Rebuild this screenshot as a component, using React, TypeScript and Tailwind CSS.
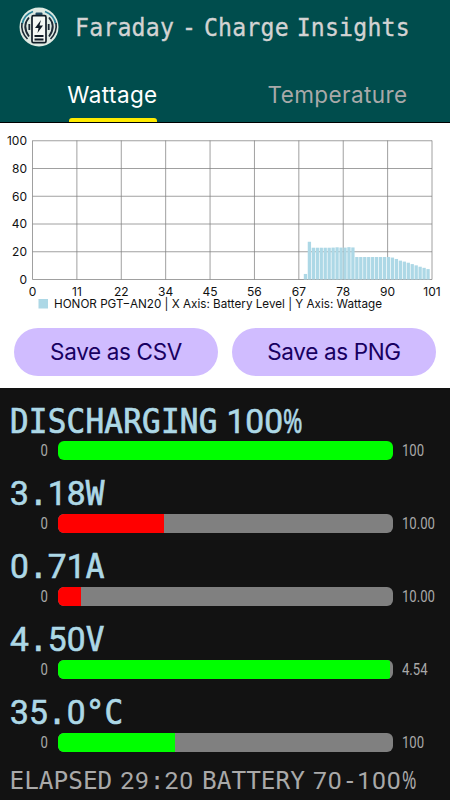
import clsx from 'clsx';

const METERS = [
  { label: 'DISCHARGING 100%', percent: 100, max: '100', color: 'bg-[#00ff00]' },
  { label: '3.18W', percent: 31.8, max: '10.00', color: 'bg-[#ff0000]' },
  { label: '0.71A', percent: 7.1, max: '10.00', color: 'bg-[#ff0000]' },
  { label: '4.50V', percent: 99.3, max: '4.54', color: 'bg-[#00ff00]' },
  { label: '35.0°C', percent: 35.2, max: '100', color: 'bg-[#00ff00]' },
];

const X_TICKS = [0, 11, 22, 34, 45, 56, 67, 78, 90, 101];
const Y_TICKS = [100, 80, 60, 40, 20, 0];

// first bar is battery level 69
const WATTS = [
  4, 27.2, 22.9, 22.9, 22.9, 22.9, 22.9, 23, 23.2, 23, 23, 23.3, 23.1,
  16.2, 16.2, 16.2, 16.2, 16.2, 16.2, 16.2, 16.2, 16.2, 15.8,
  14.8, 13.6, 12.9, 12.1, 11.1, 10.2, 9.2, 8.4, 7.5,
];

function AppLogo() {
  return (
    <svg width="40" height="40" viewBox="0 0 40 40" fill="none">
      <circle cx="20" cy="20" r="19.5" fill="#dfeae3" />
      <path d="M14 4.5Q5 8 3.200 17M26 4.500Q35 8 36.800 17" stroke="#2b8398" strokeWidth="1.8" />
      <path d="M3 16Q1.500 25 8.500 32M37 16Q38.500 25 31.500 32" stroke="#1d2935" strokeWidth="1.6" />
      <path d="M10 10.500Q2.500 19 10 29.500M30 10.500Q37.500 19 30 29.500" stroke="#1d2935" strokeWidth="1.8" />
      <path d="M10.300 17v6M29.700 17v6" stroke="#1d2935" strokeWidth="1.8" />
      <rect x="16.5" y="5.5" width="7" height="3.5" rx="1" fill="#204a62" />
      <rect x="13" y="8.7" width="14" height="27" rx="1.5" fill="#f4f8f4" stroke="#101c26" strokeWidth="1.7" />
      <path d="M22 13l-6 8h3.500l-1 5 5.500-7.500h-3.500z" fill="#101c26" />
      <path d="M15.500 29h9M15.500 32.500h9" stroke="#101c26" strokeWidth="1.9" />
    </svg>
  );
}

const RUNS = {
  title: {
    letters: 'text-[23.2px] tracking-[0.19px] scale-y-[1.04] [-webkit-text-stroke:0.3px]',
    digits: 'text-[24px]',
    percent: 'w-[14px] text-[24px]',
    gap: '[word-spacing:-6.3px]',
  },
  value: {
    letters: 'text-[31px] tracking-[0.2px] scale-y-[1.06] [-webkit-text-stroke:0.7px]',
    digits: 'text-[33.5px] tracking-[0.1px] [-webkit-text-stroke:0.6px]',
    percent: 'w-[19px] text-[33.5px] [-webkit-text-stroke:0.6px]',
    gap: '[word-spacing:-10px]',
  },
  footer: {
    letters: 'text-[24.4px]',
    digits: 'text-[24.8px] tracking-[0.85px]',
    percent: 'w-[15px] text-[24.8px]',
    gap: '[word-spacing:-6.7px]',
  },
};

// Letters use the mono face, digits a plain-zero tabular one
function MonoText({ text, variant }: { text: string; variant: keyof typeof RUNS }) {
  const cfg = RUNS[variant];
  const runs = text.match(/\d+|%|[^\d%]+/g) || [];
  return (
    <div className="flex items-baseline whitespace-pre leading-none">
      {runs.map((run, i) => {
        if (run === '%') {
          return (
            <span key={i} className={clsx("font-['Noto_Sans']", cfg.percent)}>
              <span className="inline-block origin-left scale-x-[0.7]">%</span>
            </span>
          );
        }
        return /\d/.test(run)
          ? <span key={i} className={clsx('font-[Roboto]', cfg.digits)}>{run}</span>
          : <span key={i} className={clsx("origin-[50%_80%] font-['DejaVu_Sans_Mono']", cfg.letters, cfg.gap)}>{run}</span>;
      })}
    </div>
  );
}

function WattageChart() {
  const left = 32.5;
  const bottom = 156.5;
  const stepX = 399.5 / 9;
  const stepY = 27.75;
  return (
    <svg width="450" height="196" viewBox="0 0 450 196" className="block font-[Inter]" fontSize="12" fill="#111">
      <g stroke="#808080" strokeOpacity="0.75">
        {X_TICKS.map((t, i) => <path key={t} d={`M${left + i * stepX} 17.5V${bottom}`} />)}
        {Y_TICKS.map((t, i) => <path key={t} d={`M${left} ${17.75 + i * stepY}H432`} />)}
      </g>
      {WATTS.map((w, i) => (
        <rect key={i} x={left + (69 + i) * 3.955 - 1.6} y={bottom - w * 1.3875} width="3.3" height={w * 1.3875} fill="#add8e6" />
      ))}
      {Y_TICKS.map((t, i) => <text key={t} x="27" y={22 + i * stepY} textAnchor="end">{t}</text>)}
      {X_TICKS.map((t, i) => <text key={t} x={left + i * stepX} y="172.5" textAnchor="middle">{t}</text>)}
      <rect x="38.5" y="176" width="9.5" height="9.5" fill="#add8e6" />
      <text x="54" y="185" fontSize="11.8" textLength="328" lengthAdjust="spacingAndGlyphs">HONOR PGT−AN20 | X Axis: Battery Level | Y Axis: Wattage</text>
    </svg>
  );
}

export default function App() {
  return (
    <div className="flex h-[800px] w-[450px] flex-col overflow-hidden bg-[#121212]">
      {/* Header */}
      <header className="h-[123px] shrink-0 border-b border-black bg-[#004d4d]">
        <div className="flex h-[71px] items-start pl-[18.5px] pt-[7px]">
          <AppLogo />
          <div className="ml-[16.5px] mt-[9px] text-[#d3d3d3]">
            <MonoText text="Faraday - Charge Insights" variant="title" />
          </div>
        </div>
        <div className="grid h-[51px] grid-cols-2 text-center font-[Inter] text-[22.5px] tracking-[0.4px]">
          <div className="flex flex-col items-center justify-between text-white">
            <span className="mt-[7px]">Wattage</span>
            <span className="h-1 w-[88px] shrink-0 rounded-t-[3px] bg-[#ffeb00]" />
          </div>
          <div className="pt-[7px] text-[#a9a9a9]">Temperature</div>
        </div>
      </header>

      {/* Chart */}
      <main className="h-[265px] shrink-0 bg-white">
        <WattageChart />
        <div className="flex gap-3.5 px-3.5 pt-[9px]">
          {['Save as CSV', 'Save as PNG'].map(label => (
            <button key={label} className="h-12 w-[204px] rounded-full bg-[#d0bcff] font-[Inter] text-[22.5px] tracking-[-0.35px] text-[#180061]">
              {label}
            </button>
          ))}
        </div>
      </main>

      {/* Live readings */}
      <section>
        {METERS.map(m => (
          <div key={m.label} className="h-[73.1px]">
            <div className="h-[53px] pl-[10px] pt-[15.5px] text-[#add8e6]">
              <MonoText text={m.label} variant="value" />
            </div>
            <div className="flex h-[19px] items-center text-[16px] text-[#a9a9a9] font-[Roboto]">
              <span className="w-[48px] origin-right scale-x-[0.82] text-right">0</span>
              <div className="ml-[9.5px] h-[19px] w-[335px] overflow-hidden rounded-[6px] bg-[#808080]">
                <div className={clsx('h-full', m.color)} style={{ width: `${m.percent}%` }} />
              </div>
              <span className="ml-[9.5px] origin-left scale-x-[0.82]">{m.max}</span>
            </div>
          </div>
        ))}
        <div className="pl-[9.5px] pt-[14px] text-[#a9a9a9]">
          <MonoText text="ELAPSED 29:20 BATTERY 70-100%" variant="footer" />
        </div>
      </section>
    </div>
  );
}
